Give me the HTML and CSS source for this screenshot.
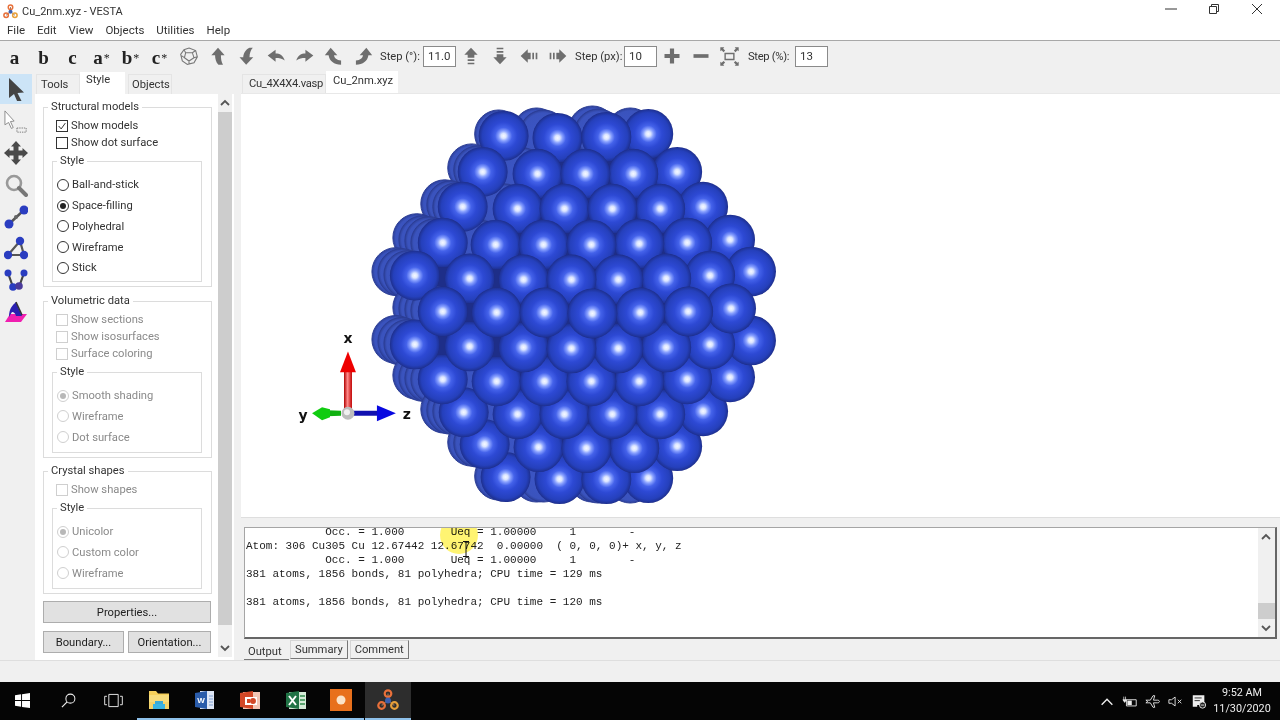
FILE: index.html
```html
<!DOCTYPE html>
<html lang="en">
<head>
<meta charset="utf-8">
<title>Cu_2nm.xyz - VESTA</title>
<link rel="stylesheet" href="styles.css">
</head>
<body>
<svg class="defs" width="0" height="0">
  <defs>
    <radialGradient id="ball">
      <stop offset="0" stop-color="#f6f9ff"/>
      <stop offset="0.1" stop-color="#dbe5ff"/>
      <stop offset="0.2" stop-color="#8aa2ff"/>
      <stop offset="0.34" stop-color="#4462ea"/>
      <stop offset="0.55" stop-color="#2d49d4"/>
      <stop offset="0.85" stop-color="#2540bc"/>
      <stop offset="0.97" stop-color="#1f3398"/>
      <stop offset="1" stop-color="#1d2c86"/>
    </radialGradient>
    <radialGradient id="ballback">
      <stop offset="0" stop-color="#3c56c8"/>
      <stop offset="0.88" stop-color="#3a53bd"/>
      <stop offset="1" stop-color="#2c3f98"/>
    </radialGradient>
    <linearGradient id="redshaft" x1="0" x2="1" y1="0" y2="0">
      <stop offset="0" stop-color="#b00000"/><stop offset="0.45" stop-color="#ff8a8a"/><stop offset="1" stop-color="#c00000"/>
    </linearGradient>
    <symbol id="logo" viewBox="0 0 24 24">
      <path d="M12 12 5 18M12 12 19 18M12 12V5" stroke="#8a6a50" stroke-width="1.500"/>
      <circle cx="12" cy="5" r="3.600" fill="none" stroke="#e8703a" stroke-width="2.400"/>
      <circle cx="5" cy="18" r="3.600" fill="none" stroke="#e8703a" stroke-width="2.400"/>
      <circle cx="19" cy="18" r="3.600" fill="none" stroke="#e8a03a" stroke-width="2.400"/>
      <circle cx="12" cy="12.500" r="3.200" fill="#3a5fb0"/>
    </symbol>
  </defs>
</svg>

<div class="app">
  <header class="titlebar">
    <svg class="title-logo"><use href="#logo"/></svg>
    <span class="title-text">Cu_2nm.xyz - VESTA</span>
    <div class="win-controls">
      <svg class="win-btn" viewBox="0 0 12 12"><path d="M0 6H12" stroke="#333" stroke-width="1"/></svg>
      <svg class="win-btn" viewBox="0 0 12 12"><path d="M1.500 3.500H8.500V10.500H1.500ZM3.500 3.500V1.500H10.500V8.500H8.500" fill="none" stroke="#333" stroke-width="1"/></svg>
      <svg class="win-btn" viewBox="0 0 12 12"><path d="M1 1 11 11M11 1 1 11" stroke="#333" stroke-width="1"/></svg>
    </div>
  </header>

  <nav class="menubar">
    <span>File</span><span>Edit</span><span>View</span><span>Objects</span><span>Utilities</span><span>Help</span>
  </nav>

  <div class="toolbar">
    <span class="tb-btn letter">a</span>
    <span class="tb-btn letter">b</span>
    <span class="tb-btn letter">c</span>
    <span class="tb-btn letter">a<sup>*</sup></span>
    <span class="tb-btn letter">b<sup>*</sup></span>
    <span class="tb-btn letter">c<sup>*</sup></span>
    <span class="tb-btn"><svg class="tb-ico" viewBox="0 0 24 24"><path d="M12 2.500 20 5.500 22 13 18 20 10 22 4 18 2 10 6 4.500ZM8 8H16L18 14 12 18 6.500 14ZM8 8 6 4.500M16 8 20 5.500M18 14 22 13M12 18V21.500M6.500 14 2 11" fill="none" stroke="#777" stroke-width="1.300"/></svg></span>
    <span class="tb-btn"><svg class="tb-ico" viewBox="0 0 24 24"><path d="M12 2 20 11H15.500C15.500 15 16 19 18 22.500H12.500C9.500 19.500 8.500 15 8.500 11H4Z" class="gf"/></svg></span>
    <span class="tb-btn"><svg class="tb-ico" viewBox="0 0 24 24"><path d="M11 22.500 3 13.500H7.500C7.500 9.500 10 4 15 2H19C16.500 4.500 15 9 15 13.500H19.500Z" class="gf"/></svg></span>
    <span class="tb-btn"><svg class="tb-ico" viewBox="0 0 24 24"><path d="M2 11.500 11.500 4.500V9C16.500 9 20.500 11 22.500 17.500 19 15 16 14.500 11.500 14.500V19Z" class="gf"/></svg></span>
    <span class="tb-btn"><svg class="tb-ico" viewBox="0 0 24 24"><path d="M22 11.500 12.500 4.500V9C7.500 9 3.500 11 1.500 17.500 5 15 8 14.500 12.500 14.500V19Z" class="gf"/></svg></span>
    <span class="tb-btn"><svg class="tb-ico" viewBox="0 0 24 24"><path d="M8 2 16 11H12C12.500 14.500 15 16.500 20.500 17.500V22.500C12 22 6.500 18 5.500 11H1Z" class="gf"/></svg></span>
    <span class="tb-btn"><svg class="tb-ico" viewBox="0 0 24 24"><path d="M16 2 8 11H12C11.500 14.500 9 16.500 3.500 17.500V22.500C12 22 17.500 18 18.500 11H23Z" class="gf"/></svg></span>
    <span class="step-label first">Step (°):</span>
    <span class="step-input">11.0</span>
    <span class="tb-btn"><svg class="tb-ico" viewBox="0 0 24 24"><path d="M12 2 20 10.500H16V14H8V10.500H4ZM8 16H16V18H8ZM8 20H16V22H8Z" class="gf"/></svg></span>
    <span class="tb-btn"><svg class="tb-ico" viewBox="0 0 24 24"><path d="M12 22 20 13.500H16V10H8V13.500H4ZM8 8H16V6H8ZM8 4H16V2H8Z" class="gf"/></svg></span>
    <span class="tb-btn"><svg class="tb-ico" viewBox="0 0 24 24"><path d="M2 12 10.500 4V8H14V16H10.500V20ZM16 8H18V16H16ZM20 8H22V16H20Z" class="gf"/></svg></span>
    <span class="tb-btn"><svg class="tb-ico" viewBox="0 0 24 24"><path d="M22 12 13.500 4V8H10V16H13.500V20ZM8 8H6V16H8ZM4 8H2V16H4Z" class="gf"/></svg></span>
    <span class="step-label px">Step (px):</span>
    <span class="step-input">10</span>
    <span class="tb-btn"><svg class="tb-ico" viewBox="0 0 24 24"><path d="M9.500 3H14.500V9.500H21V14.500H14.500V21H9.500V14.500H3V9.500H9.500Z" class="gf"/></svg></span>
    <span class="tb-btn"><svg class="tb-ico" viewBox="0 0 24 24"><path d="M3 9.800H21V14.200H3Z" class="gf"/></svg></span>
    <span class="tb-btn"><svg class="tb-ico wide" viewBox="0 0 24 24"><path d="M7 8.500H17V15.500H7Z" fill="none" stroke="#6e6e6e" stroke-width="1.600"/><path d="M1.500 1.500H6L4.800 3 7 5.200 5.200 7 3 4.800 1.500 6ZM22.500 1.500H18L19.200 3 17 5.200 18.800 7 21 4.800 22.500 6ZM1.500 22.500H6L4.800 21 7 18.800 5.200 17 3 19.200 1.500 18ZM22.500 22.500H18L19.200 21 17 18.800 18.800 17 21 19.200 22.500 18Z" class="gf"/></svg></span>
    <span class="step-label pct">Step (%):</span>
    <span class="step-input">13</span>
  </div>

  <main class="main">
    <aside class="tools">
      <span class="tool selected"><svg class="tool-ico" viewBox="0 0 24 24"><path d="M5 1 20 15.500 13.500 16 17.500 24 13.500 25 10 17 5 21Z" fill="#444"/></svg></span>
      <span class="tool"><svg class="tool-ico" viewBox="0 0 26 26"><path d="M1 1 11 12 7 12.500 10 19 8 20 5 13.500 1 16Z" fill="#fff" stroke="#888"/><path d="M14 19.500H24V24H14Z" fill="none" stroke="#777" stroke-dasharray="1.500 1"/></svg></span>
      <span class="tool"><svg class="tool-ico" viewBox="0 0 24 24"><path d="M12 0 17 5.500H14.500V9.500H18.500V7L24 12 18.500 17V14.500H14.500V18.500H17L12 24 7 18.500H9.500V14.500H5.500V17L0 12 5.500 7V9.500H9.500V5.500H7Z" fill="#4a4a4a"/></svg></span>
      <span class="tool"><svg class="tool-ico" viewBox="0 0 24 24"><circle cx="10" cy="10" r="7" fill="none" stroke="#999" stroke-width="2.600"/><path d="M15 15 22 22" stroke="#777" stroke-width="4" stroke-linecap="round"/></svg></span>
      <span class="tool"><svg class="tool-ico" viewBox="0 0 24 24"><path d="M5 19 20 5" stroke="#555" stroke-width="2.500"/><circle cx="5" cy="19" r="4.500" fill="#2a3dc0"/><circle cx="20" cy="5" r="4.500" fill="#2a3dc0"/><circle cx="12" cy="12" r="2" fill="#666"/></svg></span>
      <span class="tool"><svg class="tool-ico" viewBox="0 0 24 24"><path d="M4 19H20L16 5Z" fill="none" stroke="#555" stroke-width="2.200"/><circle cx="4" cy="19" r="4.200" fill="#2a3dc0"/><circle cx="20" cy="19" r="4.200" fill="#2a3dc0"/><circle cx="16" cy="5" r="4.200" fill="#2a3dc0"/></svg></span>
      <span class="tool"><svg class="tool-ico" viewBox="0 0 24 24"><path d="M4 5 9 19H15L20 5" fill="none" stroke="#444" stroke-width="2.200"/><circle cx="4" cy="5" r="3.500" fill="#2a3dc0"/><circle cx="20" cy="5" r="3.500" fill="#2a3dc0"/><circle cx="9" cy="19" r="3.800" fill="#2a3dc0"/><circle cx="15" cy="18" r="3.800" fill="#4a3a9a"/></svg></span>
      <span class="tool"><svg class="tool-ico" viewBox="0 0 24 24"><path d="M1 22 6 14H23L17 22Z" fill="#f01fb0"/><path d="M5 17C5 8 9 5 12 2L18 16H12C11 13 10 12 8 12Z" fill="#2a20b0"/><path d="M12 2 18 15" stroke="#333" stroke-width="1.500"/></svg></span>
    </aside>

    <section class="side">
      <div class="side-tabs">
        <span class="side-tab tools-tab">Tools</span>
        <span class="side-tab active">Style</span>
        <span class="side-tab objects-tab">Objects</span>
      </div>
      <div class="side-body">
        <div class="side-content">
          <fieldset class="group">
            <legend>Structural models</legend>
            <div class="rows">
              <label class="check-row"><span class="check on"><svg viewBox="0 0 12 12"><path d="M2 6 5 9.500 10 2.500" fill="none" stroke="#333" stroke-width="1.200"/></svg></span>Show models</label>
              <label class="check-row"><span class="check"></span>Show dot surface</label>
            </div>
            <fieldset class="group inner first">
              <legend>Style</legend>
              <div class="radios">
                <label class="radio-row"><span class="radio"></span>Ball-and-stick</label>
                <label class="radio-row"><span class="radio on"></span>Space-filling</label>
                <label class="radio-row"><span class="radio"></span>Polyhedral</label>
                <label class="radio-row"><span class="radio"></span>Wireframe</label>
                <label class="radio-row"><span class="radio"></span>Stick</label>
              </div>
            </fieldset>
          </fieldset>

          <fieldset class="group second off">
            <legend>Volumetric data</legend>
            <div class="rows">
              <label class="check-row"><span class="check"></span>Show sections</label>
              <label class="check-row"><span class="check"></span>Show isosurfaces</label>
              <label class="check-row"><span class="check"></span>Surface coloring</label>
            </div>
            <fieldset class="group inner">
              <legend>Style</legend>
              <div class="radios">
                <label class="radio-row"><span class="radio on"></span>Smooth shading</label>
                <label class="radio-row"><span class="radio"></span>Wireframe</label>
                <label class="radio-row"><span class="radio"></span>Dot surface</label>
              </div>
            </fieldset>
          </fieldset>

          <fieldset class="group third off">
            <legend>Crystal shapes</legend>
            <div class="rows">
              <label class="check-row"><span class="check"></span>Show shapes</label>
            </div>
            <fieldset class="group inner">
              <legend>Style</legend>
              <div class="radios">
                <label class="radio-row"><span class="radio on"></span>Unicolor</label>
                <label class="radio-row"><span class="radio"></span>Custom color</label>
                <label class="radio-row"><span class="radio"></span>Wireframe</label>
              </div>
            </fieldset>
          </fieldset>

          <div class="btn-stack">
            <span class="btn">Properties...</span>
            <div class="btn-row">
              <span class="btn">Boundary...</span>
              <span class="btn">Orientation...</span>
            </div>
          </div>
        </div>
        <div class="vscroll side-scroll">
          <svg class="sb-arrow" viewBox="0 0 10 10"><path d="M1 7 5 3 9 7" fill="none" stroke="#555" stroke-width="1.800"/></svg>
          <span class="sb-track"><span class="sb-thumb"></span></span>
          <svg class="sb-arrow" viewBox="0 0 10 10"><path d="M1 3 5 7 9 3" fill="none" stroke="#555" stroke-width="1.800"/></svg>
        </div>
      </div>
    </section>

    <section class="work">
      <div class="doc-tabs">
        <span class="doc-tab">Cu_4X4X4.vasp</span>
        <span class="doc-tab active">Cu_2nm.xyz</span>
      </div>
      <div class="viewport">
        <svg class="scene" viewBox="241 94 1039 424">
          <path class="core" d="M505 125H650L700 200 750 272 750 345 700 420 650 480H505L450 420 415 345 415 272 450 200Z"/>
          <g class="back" fill="url(#ballback)">
            <circle cx="498" cy="134"/><circle cx="536" cy="132"/><circle cx="543" cy="134"/><circle cx="592" cy="130"/><circle cx="598" cy="133"/><circle cx="630" cy="132"/>
            <circle cx="471" cy="168"/><circle cx="477" cy="170"/><circle cx="515" cy="172"/><circle cx="522" cy="172"/>
            <circle cx="444" cy="204"/><circle cx="450" cy="205"/><circle cx="456" cy="207"/><circle cx="495" cy="207"/><circle cx="503" cy="208"/>
            <circle cx="416" cy="238"/><circle cx="422" cy="240"/><circle cx="428" cy="241"/><circle cx="434" cy="243"/><circle cx="473" cy="244"/><circle cx="482" cy="245"/>
            <circle cx="395" cy="272"/><circle cx="401" cy="273"/><circle cx="407" cy="275"/>
            <circle cx="416" cy="308"/><circle cx="422" cy="309"/><circle cx="428" cy="310"/><circle cx="434" cy="311"/>
            <circle cx="395" cy="340"/><circle cx="401" cy="342"/><circle cx="407" cy="344"/>
            <circle cx="416" cy="376"/><circle cx="422" cy="378"/><circle cx="428" cy="379"/><circle cx="434" cy="380"/><circle cx="473" cy="381"/><circle cx="482" cy="382"/>
            <circle cx="444" cy="410"/><circle cx="450" cy="411"/><circle cx="456" cy="412"/><circle cx="495" cy="414"/><circle cx="503" cy="414"/>
            <circle cx="471" cy="443"/><circle cx="477" cy="444"/><circle cx="515" cy="447"/><circle cx="522" cy="447"/>
            <circle cx="498" cy="477"/><circle cx="536" cy="479"/><circle cx="543" cy="479"/><circle cx="592" cy="479"/><circle cx="598" cy="480"/><circle cx="630" cy="480"/>
          </g>
          <g class="front" fill="url(#ball)">
            <circle cx="503" cy="136"/><circle cx="648" cy="134"/><circle cx="557" cy="138"/><circle cx="606" cy="137"/>
            <circle cx="505" cy="478"/><circle cx="648" cy="479"/><circle cx="559" cy="480"/><circle cx="606" cy="480"/>
            <circle cx="482" cy="172"/><circle cx="677" cy="172"/><circle cx="537" cy="174"/><circle cx="633" cy="174"/><circle cx="585" cy="174"/>
            <circle cx="484" cy="445"/><circle cx="677" cy="447"/><circle cx="538" cy="448"/><circle cx="634" cy="449"/><circle cx="586" cy="449"/>
            <circle cx="703" cy="207"/><circle cx="462" cy="207"/><circle cx="517" cy="209"/><circle cx="660" cy="209"/><circle cx="564" cy="209"/><circle cx="612" cy="209"/>
            <circle cx="703" cy="412"/><circle cx="463" cy="413"/><circle cx="517" cy="415"/><circle cx="660" cy="415"/><circle cx="564" cy="415"/><circle cx="612" cy="415"/>
            <circle cx="730" cy="240"/><circle cx="442" cy="243"/><circle cx="687" cy="243"/><circle cx="495" cy="245"/><circle cx="639" cy="244"/><circle cx="543" cy="245"/><circle cx="591" cy="245"/>
            <circle cx="730" cy="378"/><circle cx="442" cy="380"/><circle cx="687" cy="380"/><circle cx="496" cy="382"/><circle cx="639" cy="382"/><circle cx="544" cy="382"/><circle cx="591" cy="382"/>
            <circle cx="751" cy="272"/><circle cx="414" cy="276"/><circle cx="710" cy="276"/><circle cx="469" cy="279"/><circle cx="666" cy="279"/><circle cx="523" cy="280"/><circle cx="618" cy="280"/><circle cx="571" cy="280"/>
            <circle cx="751" cy="341"/><circle cx="414" cy="345"/><circle cx="710" cy="345"/><circle cx="469" cy="347"/><circle cx="666" cy="348"/><circle cx="523" cy="348"/><circle cx="618" cy="349"/><circle cx="571" cy="349"/>
            <circle cx="731" cy="309"/><circle cx="442" cy="312"/><circle cx="688" cy="312"/><circle cx="496" cy="313"/><circle cx="640" cy="313"/><circle cx="544" cy="313"/><circle cx="592" cy="314"/>
          </g>
          <g class="axes">
            <path d="M343 414V372H351V414Z" fill="url(#redshaft)"/>
            <path d="M339 373 347 352 355 373Z" fill="#ee0000"/>
            <path d="M340 411.500V416.500L326 417 326 411Z" fill="#10b010"/>
            <path d="M311 414 321 408 329 410 329 418 321 421Z" fill="#10cc10"/>
            <path d="M352 411.500H378V416.500H352Z" fill="#1010b0"/>
            <path d="M376 406 395 414 376 422Z" fill="#0808e0"/>
            <circle cx="347" cy="414" r="6.500" fill="#bdbdbd"/>
            <circle cx="346" cy="413" r="3" fill="#f0f0f0"/>
            <text x="347" y="344" class="axis-label">x</text>
            <text x="302" y="421" class="axis-label">y</text>
            <text x="406" y="420" class="axis-label">z</text>
          </g>
        </svg>
      </div>
      <div class="output">
        <pre class="log">            Occ. = 1.000       Ueq = 1.00000     1        -
Atom: 306 Cu305 Cu 12.67442 12.67742  0.00000  ( 0, 0, 0)+ x, y, z
            Occ. = 1.000       Ueq = 1.00000     1        -
381 atoms, 1856 bonds, 81 polyhedra; CPU time = 129 ms

381 atoms, 1856 bonds, 81 polyhedra; CPU time = 120 ms</pre>
        <div class="vscroll out-scroll">
          <svg class="sb-arrow" viewBox="0 0 10 10"><path d="M1 7 5 3 9 7" fill="none" stroke="#555" stroke-width="1.800"/></svg>
          <span class="sb-track end"><span class="sb-thumb small"></span></span>
          <svg class="sb-arrow" viewBox="0 0 10 10"><path d="M1 3 5 7 9 3" fill="none" stroke="#555" stroke-width="1.800"/></svg>
        </div>
        <span class="highlight"></span>
        <svg class="ibeam" viewBox="0 0 8 16"><path d="M1 .5H7M1 15.500H7M4 .5V15.500" stroke="#111" stroke-width="1"/></svg>
      </div>
      <div class="out-tabs">
        <span class="out-tab active">Output</span>
        <span class="out-tab">Summary</span>
        <span class="out-tab">Comment</span>
      </div>
    </section>
  </main>

  <div class="statusbar"></div>

  <footer class="taskbar">
    <span class="task"><svg class="task-ico" viewBox="0 0 16 16"><path d="M0 2.300 6.500 1.400V7.500H0ZM7.500 1.200 16 0V7.500H7.500ZM0 8.500H6.500V14.600L0 13.700ZM7.500 8.500H16V16L7.500 14.800Z" fill="#fff"/></svg></span>
    <span class="task"><svg class="task-ico" viewBox="0 0 16 16"><circle cx="10" cy="6" r="4.800" fill="none" stroke="#eee" stroke-width="1.100"/><path d="M6.500 9.500 1 15" stroke="#eee" stroke-width="1.300"/></svg></span>
    <span class="task"><svg class="task-ico wide" viewBox="0 0 20 16"><path d="M5 1.500H15V14.500H5ZM3 3.500H.6V12.500H3M17 3.500H19.400V12.500H17" fill="none" stroke="#eee" stroke-width="1"/></svg></span>
    <span class="task open"><svg class="task-big" viewBox="0 0 22 20"><path d="M1 1H8L10 3.500H21V8H1Z" fill="#f5cf5a"/><path d="M1 5H21V19H1Z" fill="#f7dc7c"/><path d="M1 12H21V19H1Z" fill="#f4d36a"/><path d="M7 11H15V14H7Z" fill="#39a9d8"/><path d="M5 14H17V19H5Z" fill="#39b4e4"/></svg></span>
    <span class="task open"><svg class="task-big" viewBox="0 0 22 20"><path d="M6 1H20V19H6Z" fill="#dfe7f5"/><path d="M1 3 13 1V19L1 17Z" fill="#2a5caa"/><text x="7" y="12.500" class="doc-letter">W</text><path d="M15 6H19M15 9H19M15 12H19M15 15H19" stroke="#7f9fd0"/></svg></span>
    <span class="task open"><svg class="task-big" viewBox="0 0 22 20"><path d="M4 2H21V19H4Z" fill="#f3c5b4"/><path d="M1 3 14 1V19L1 17Z" fill="#d24726"/><path d="M6 7H18V15H6Z" fill="#fff"/><circle cx="14" cy="11" r="3" fill="#d24726"/><path d="M8 9H11V13H8Z" fill="#d24726"/></svg></span>
    <span class="task open"><svg class="task-big" viewBox="0 0 22 20"><path d="M4 2H21V19H4Z" fill="#d5ead7"/><path d="M1 3 14 1V19L1 17Z" fill="#207245"/><path d="M4 6 11 15M11 6 4 15" stroke="#fff" stroke-width="2"/><path d="M15 6H20M15 10H20M15 14H20" stroke="#5aa36f" stroke-width="2"/></svg></span>
    <span class="task open"><svg class="task-big" viewBox="0 0 22 22"><path d="M0 0H22V22H0Z" fill="#e8701c"/><circle cx="11" cy="11" r="4.500" fill="#fbe3c8"/></svg></span>
    <span class="task open current"><svg class="task-big"><use href="#logo"/></svg></span>
    <div class="tray">
      <svg class="tray-ico" viewBox="0 0 14 14"><path d="M2 10 7 5 12 10" fill="none" stroke="#eee" stroke-width="1.300"/></svg>
      <svg class="tray-ico" viewBox="0 0 18 14"><path d="M5 5H16V12H5Z" fill="none" stroke="#eee"/><path d="M6 6H11V11H6Z" fill="#eee"/><path d="M2 1.500V6M4 1.500V6M1 5H5L3 8Z" stroke="#eee" fill="#eee" stroke-width=".8"/></svg>
      <svg class="tray-ico" viewBox="0 0 18 14"><path d="M1 5.500H6L9 .5H11L9.500 5.500H14C17 5.500 17 8.500 14 8.500H9.500L11 13.500H9L6 8.500H1L3 7Z" fill="none" stroke="#eee"/></svg>
      <svg class="tray-ico" viewBox="0 0 18 14"><path d="M1 5H4L8 2V12L4 9H1Z" fill="none" stroke="#eee"/><path d="M11 5 15 9M15 5 11 9" stroke="#eee"/></svg>
      <svg class="tray-ico" viewBox="0 0 18 16"><path d="M2 1H15V12H7V14H2Z" fill="#eee"/><path d="M4 4H12M4 7H10" stroke="#222"/><circle cx="13" cy="12" r="3.500" fill="#222" stroke="#eee"/><path d="M11 12H15" stroke="#eee"/></svg>
      <div class="clock"><span>9:52 AM</span><span>11/30/2020</span></div>
    </div>
  </footer>
</div>
</body>
</html>
```
FILE: styles.css
```css
* { box-sizing: border-box; }
html, body { margin: 0; padding: 0; }
body { width: 1280px; height: 720px; overflow: hidden; background: #fff; font-family: Roboto, "Open Sans", "Liberation Sans", sans-serif; font-size: 11.200px; color: #222; }
.defs { display: block; height: 0; }
.app { width: 1280px; height: 720px; display: flex; flex-direction: column; }

.titlebar { height: 21px; display: flex; align-items: center; padding-left: 3px; background: #fff; }
.title-logo { width: 15px; height: 15px; margin-right: 4px; margin-top: 1px; }
.title-text { font-size: 11px; color: #333; margin-top: 1px; }
.win-controls { margin-left: auto; display: flex; gap: 31px; padding-right: 17px; }
.win-btn { width: 12px; height: 12px; margin-top: -3px; }

.menubar { height: 20px; display: flex; align-items: center; gap: 12px; padding: 0 0 1px 7px; background: #fff; border-bottom: 1px solid #a8a8a8; font-size: 11.500px; color: #333; }

.toolbar { height: 30px; display: flex; align-items: center; background: #f0f0f0; }
.tb-btn { width: 29px; height: 30px; display: flex; align-items: center; justify-content: center; flex: none; }
.letter { font-family: "Liberation Serif", serif; font-weight: 700; font-size: 19px; color: #222; padding-top: 3px; }
.letter sup { font-size: 12px; line-height: 0; margin-left: 1px; vertical-align: 6px; font-weight: 400; }
.tb-ico { width: 20px; height: 20px; }
.tb-ico.wide { width: 21px; height: 21px; }
.gf { fill: #6e6e6e; }
.step-label { font-size: 11.200px; color: #333; margin: 0 3px; white-space: nowrap; flex: none; }
.step-label.first { width: 40px; }
.step-label.px { width: 46px; }
.step-label.pct { margin-left: 4px; width: 44px; letter-spacing: -.3px; }
.step-input { width: 33px; height: 21px; background: #fff; border: 1px solid #8a8a8a; display: flex; align-items: center; padding-left: 4px; font-size: 11.500px; color: #333; flex: none; }

.main { flex: 1; min-height: 0; display: flex; background: #f0f0f0; }
.tools { width: 35px; flex: none; display: flex; flex-direction: column; padding-top: 3px; }
.tool { width: 32px; height: 31.700px; display: flex; align-items: center; justify-content: center; flex: none; }
.tool.selected { background: #cce4f7; height: 30px; margin-bottom: 1.700px; }
.tool-ico { width: 24px; height: 24px; }

.side { width: 206px; flex: none; display: flex; flex-direction: column; }
.side-tabs { height: 23px; display: flex; align-items: flex-end; padding-left: 1px; }
.side-tab { height: 20px; padding: 3px 0 0 4px; background: #f0f0f0; border: 1px solid #e4e4e4; border-bottom: 0; color: #333; flex: none; }
.tools-tab { width: 44px; }
.side-tab.active { height: 22px; width: 45px; background: #fff; border: 0; padding: 1px 0 0 6px; }
.objects-tab { width: 44px; margin-left: 3px; padding-left: 3px; }
.side-body { flex: 1; min-height: 0; width: 199px; background: #fff; display: flex; padding: 0 2px 3px 8px; }
.side-content { width: 175px; flex: none; padding-top: 5px; }
.group { border: 1px solid #dcdcdc; margin: 0; padding: 0 0 4px 0; min-width: 0; width: 169px; }
.group legend { padding: 0 3px; margin-left: 4px; height: 16px; line-height: 16px; color: #333; font-size: 11.200px; }
.group.second { margin-top: 6px; }
.group.third { margin-top: 5px; }
.group.inner { width: 150px; margin: 2px 0 0 8px; padding: 5px 0 4.600px 0; }
.group.inner.first { padding: 5.600px 0 3px 0; }
.rows { padding-top: 2px; }
.check-row { height: 17px; display: flex; align-items: center; padding-left: 12px; color: #333; }
.check { width: 12px; height: 12px; border: 1px solid #333; margin-right: 3px; background: #fff; flex: none; display: block; }
.check svg { display: block; width: 10px; height: 10px; }
.radio-row { height: 20.750px; display: flex; align-items: center; padding-left: 4px; color: #333; }
.radio { width: 12px; height: 12px; border-radius: 50%; border: 1px solid #333; background: #fff; margin-right: 3px; flex: none; display: flex; align-items: center; justify-content: center; }
.radio.on::after { content: ""; width: 6px; height: 6px; border-radius: 50%; background: #222; }
.off .check-row, .off .radio-row { color: #8a8a8a; }
.off .check, .off .radio { border-color: #cfcfcf; }
.off .radio.on::after { background: #b8b8b8; }
.btn-stack { margin-top: 7px; width: 168px; display: flex; flex-direction: column; gap: 8px; }
.btn-row { display: flex; gap: 4px; }
.btn { height: 22px; flex: 0 0 auto; background: #e1e1e1; border: 1px solid #adadad; display: flex; align-items: center; justify-content: center; color: #222; }
.btn-row .btn { flex: 1; }
.btn-row .btn:first-child { flex: 0 0 81px; }

.vscroll { width: 14px; flex: none; display: flex; flex-direction: column; background: #f0f0f0; }
.sb-arrow { width: 10px; height: 10px; flex: none; margin: 4px 2px; }
.sb-track { flex: 1; display: flex; }
.sb-track.end { align-items: flex-end; }
.sb-thumb { display: block; width: 100%; height: 513px; background: #cdcdcd; }
.sb-thumb.small { height: 16px; }

.work { flex: 1; min-width: 0; display: flex; flex-direction: column; }
.doc-tabs { height: 23px; display: flex; align-items: flex-end; padding-left: 1px; border-bottom: 1px solid #e8e8e8; }
.doc-tab { height: 19px; padding: 2px 0 0 6px; width: 84px; border: 1px solid #e4e4e4; border-bottom: 0; color: #333; flex: none; letter-spacing: -.3px; }
.doc-tab.active { height: 22px; width: 72px; background: #fff; border: 0; padding: 3px 0 0 7px; letter-spacing: 0; }
.viewport { height: 424px; background: #fff; border-bottom: 1px solid #dedede; }
.scene { display: block; width: 1039px; height: 423px; }
.core { fill: #1e2e88; }
.back circle { r: 24px; stroke: #2b3d96; stroke-width: 1; }
.front circle { r: 25px; }
.axis-label { font-family: "DejaVu Sans", sans-serif; font-weight: 700; font-size: 14px; text-anchor: middle; fill: #111; }
.output { position: relative; height: 112px; margin: 9px 3px 0 3px; background: #fff; border: 1px solid #a5a5a5; border-right: 2px solid #666; border-bottom: 2px solid #666; display: flex; overflow: hidden; }
.log { flex: 1; margin: -3px 0 0 1px; font-family: "Liberation Mono", monospace; font-size: 11px; line-height: 14px; color: #222; }
.out-scroll { width: 17px; background: #f0f0f0; }
.out-scroll .sb-arrow { margin: 4px 3px; }
.highlight { position: absolute; left: 195px; top: -12px; width: 38px; height: 38px; border-radius: 50%; background: rgba(255, 240, 60, .72); mix-blend-mode: multiply; }
.ibeam { position: absolute; left: 217px; top: 13px; width: 8px; height: 16px; }
.out-tabs { height: 21px; display: flex; padding: 1px 0 0 3px; }
.out-tab { height: 19px; padding: 0 4px; border: 1px solid #d5d5d5; border-right-color: #777; border-bottom-color: #777; background: #f0f0f0; margin-right: 2px; color: #333; line-height: 17px; }
.out-tab.active { border: 0; border-bottom: 1px solid #777; height: 20px; width: 45px; margin-right: 1px; padding: 3px 0 0 4px; }

.statusbar { height: 22px; flex: none; background: #f0f0f0; border-top: 1px solid #dedede; }

.taskbar { height: 38px; flex: none; background: #050505; display: flex; align-items: stretch; }
.task { width: 45.500px; display: flex; align-items: center; justify-content: center; flex: none; border-bottom: 2px solid transparent; }
.task.open { border-bottom-color: #8ec1ea; }
.task.current { background: #2d2d2d; margin-left: 1px; }
.task-ico { width: 15px; height: 15px; }
.task-ico.wide { width: 19px; }
.task-big { width: 22px; height: 22px; }
.doc-letter { font-family: "Liberation Sans", sans-serif; font-size: 8px; font-weight: 700; fill: #fff; text-anchor: middle; }
.tray { margin-left: auto; display: flex; align-items: center; padding-right: 10px; gap: 7px; }
.tray-ico { width: 16px; height: 15px; }
.clock { display: flex; flex-direction: column; align-items: center; color: #eee; font-size: 10.800px; line-height: 16px; width: 56px; }
```
